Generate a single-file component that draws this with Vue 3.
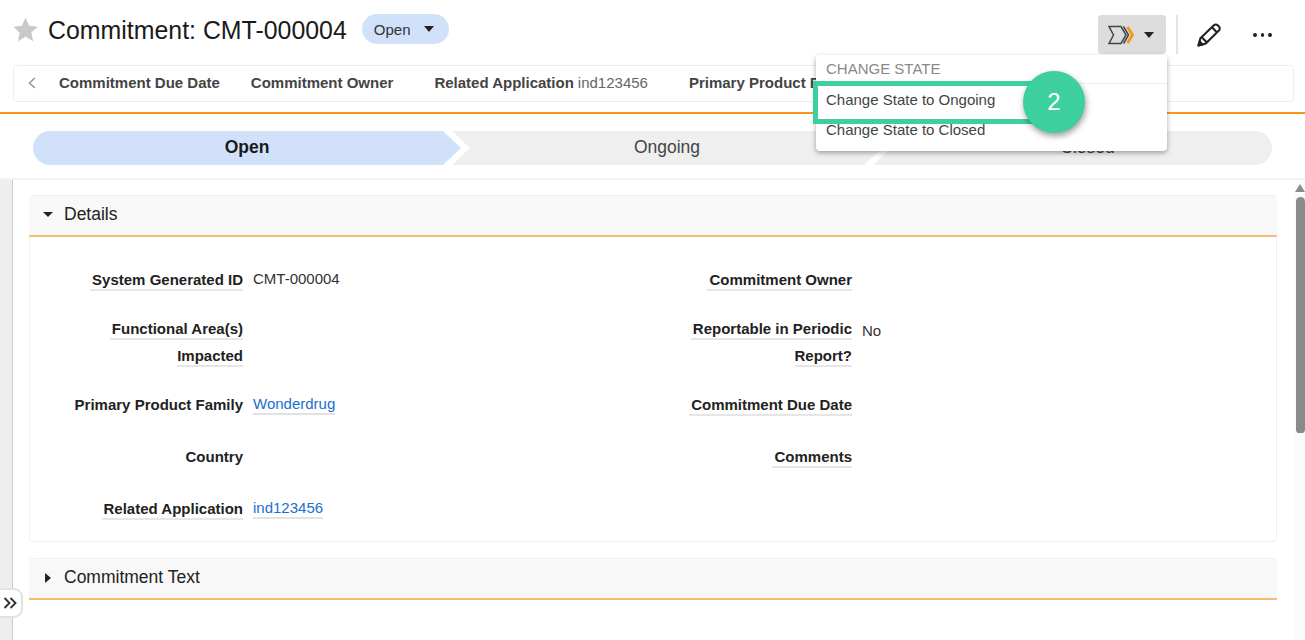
<script setup>
const tabs = [
  { label: 'Commitment Due Date' },
  { label: 'Commitment Owner' },
  { label: 'Related Application', value: 'ind123456', cls: 'tab-wide' },
  { label: 'Primary Product Family', value: 'Wonderdrug', cls: 'tab-wide' }
]
const rows = [
  { cls: '', left: { label: 'System Generated ID', value: 'CMT-000004' }, right: { label: 'Commitment Owner' } },
  { cls: '', left: { label: 'Functional Area(s) Impacted' }, right: { label: 'Reportable in Periodic Report?', value: 'No', low: true } },
  { cls: '', left: { label: 'Primary Product Family', plain: true, value: 'Wonderdrug', link: true }, right: { label: 'Commitment Due Date' } },
  { cls: 'row-tall', left: { label: 'Country', plain: true }, right: { label: 'Comments' } },
  { cls: '', left: { label: 'Related Application', value: 'ind123456', link: true }, right: {} }
]
</script>

<template>
  <div class="page">
    <header class="head">
      <div class="title-row">
        <svg class="star" viewBox="0 0 24 24" width="25" height="25"><polygon points="12,0.8 15.5,8.4 23.8,9.3 17.6,14.9 19.3,23.2 12,19 4.7,23.2 6.4,14.9 0.2,9.3 8.5,8.4" fill="#c9c9c9"/></svg>
        <h1 class="title">Commitment: CMT-000004</h1>
        <div class="badge"><span>Open</span><i class="caret"></i></div>
        <div class="actions">
          <button class="state-btn">
            <svg width="28" height="20" viewBox="0 0 28 20" fill="none">
              <path d="M1 1.5H13L18 10L13 18.5H1L5.5 10Z" stroke="#444" stroke-width="1.5"/>
              <path d="M15.5 1.5L20.5 10L15.5 18.5" stroke="#444" stroke-width="1.5"/>
              <path d="M19.5 2L24.5 10L19.5 18" stroke="#f39a1e" stroke-width="3"/>
            </svg>
            <i class="caret"></i>
          </button>
          <span class="sep"></span>
          <svg class="pencil" width="24" height="24" viewBox="0 0 24 24" fill="none" stroke="#222" stroke-width="2.1" stroke-linejoin="round">
            <path d="M1.5 22.5L3.4 15.2L16.6 2.4C17.8 1.2 19.7 1.2 20.9 2.4L21.9 3.4C23.1 4.6 23.1 6.4 21.9 7.6L8.8 20.6Z"/>
            <path d="M15 4.2L20 9.4M5 14.5L10 19.6"/>
            <path d="M1.5 22.5L2.6 18.5L5.6 21.5Z" fill="#222"/>
          </svg>
          <div class="dots"><b></b><b></b><b></b></div>
        </div>
      </div>
      <div class="tabs">
        <svg class="tab-back" width="8" height="12" viewBox="0 0 8 12" fill="none"><path d="M6.8 1L1.5 6L6.8 11" stroke="#999" stroke-width="1.6"/></svg>
        <span v-for="t in tabs" :key="t.label" class="tab" :class="t.cls">
          <strong>{{ t.label }}</strong><span v-if="t.value" class="tab-val">{{ t.value }}</span>
        </span>
      </div>
    </header>

    <div class="path">
      <div class="seg seg-open">Open</div>
      <div class="seg seg-ongoing">Ongoing</div>
      <div class="seg seg-closed">Closed</div>
    </div>

    <div class="body">
      <div class="rail"></div>
      <main class="main">
        <section class="card">
          <div class="sec-head"><i class="caret caret-big"></i><span>Details</span></div>
          <div class="form">
            <div v-for="(r, i) in rows" :key="i" class="row" :class="r.cls">
              <template v-for="(c, j) in [r.left, r.right]" :key="j">
                <div class="label"><span v-if="c.label" :class="{ lined: !c.plain }">{{ c.label }}</span></div>
                <div class="value" :class="{ low: c.low }">
                  <span v-if="c.value" :class="{ link: c.link }">{{ c.value }}</span>
                </div>
              </template>
            </div>
          </div>
        </section>
        <section class="card card-closed">
          <div class="sec-head"><i class="caret-right"></i><span>Commitment Text</span></div>
        </section>
      </main>
      <div class="scroll">
        <i class="scroll-up"></i>
        <div class="thumb"></div>
      </div>
    </div>

    <button class="toggle">
      <svg width="14" height="12" viewBox="0 0 14 12" fill="none" stroke="#333" stroke-width="1.9"><path d="M1.5 1L6.5 6L1.5 11M7.5 1L12.5 6L7.5 11"/></svg>
    </button>

    <div class="menu">
      <div class="menu-head">CHANGE STATE</div>
      <div class="menu-item first">Change State to Ongoing</div>
      <div class="menu-item">Change State to Closed</div>
    </div>
    <div class="highlight"></div>
    <div class="step">2</div>
  </div>
</template>

<style>
html, body { margin: 0; overflow: hidden; background: #fff; }
</style>

<style scoped>
.page {
  position: relative;
  width: 1305px;
  height: 640px;
  overflow: hidden;
  display: flex;
  flex-direction: column;
  background: #fff;
  font-family: "Liberation Sans", Arial, sans-serif;
  font-size: 15px;
  color: #222;
}
.head {
  box-sizing: border-box;
  height: 114px;
  flex: none;
  border-bottom: 2px solid #f7981d;
}
.title-row {
  box-sizing: border-box;
  height: 65px;
  padding: 14px 0 0 13px;
  display: flex;
  align-items: flex-start;
}
.star { margin-top: 3px; flex: none; }
.title {
  margin: 0 0 0 10px;
  font-size: 24.9px;
  font-weight: 400;
  line-height: 32px;
  color: #1a1a1a;
  white-space: nowrap;
}
.badge {
  box-sizing: border-box;
  margin-left: 15px;
  width: 87px;
  height: 30px;
  border-radius: 15px;
  background: #d1e1f9;
  display: flex;
  align-items: center;
  padding-left: 12px;
  color: #333;
}
.badge .caret { margin-left: 13px; }
.caret {
  display: inline-block;
  width: 0;
  height: 0;
  border-left: 5.5px solid transparent;
  border-right: 5.5px solid transparent;
  border-top: 6px solid #222;
}
.caret-big { border-left-width: 5px; border-right-width: 5px; border-top-width: 5px; }
.caret-right {
  display: inline-block;
  width: 0;
  height: 0;
  margin-left: 2px;
  margin-right: 2px;
  border-top: 5px solid transparent;
  border-bottom: 5px solid transparent;
  border-left: 6px solid #222;
}
.actions {
  margin-left: auto;
  margin-top: 1px;
  margin-right: 33px;
  display: flex;
  align-items: center;
  height: 39px;
}
.state-btn {
  box-sizing: border-box;
  width: 68px;
  height: 39px;
  border: 0;
  border-radius: 4px;
  background: #dcdcdc;
  display: flex;
  align-items: center;
  padding: 0 0 0 10px;
}
.state-btn .caret { margin-left: 8px; }
.sep { width: 2px; height: 39px; background: #e2e2e2; margin-left: 10px; }
.pencil { margin-left: 19px; }
.dots { display: flex; gap: 4px; margin-left: 32px; width: 19px; }
.dots b { width: 4px; height: 4px; border-radius: 50%; background: #222; }
.tabs {
  box-sizing: border-box;
  margin-left: 13px;
  width: 1281px;
  height: 37px;
  padding-bottom: 2px;
  border: 1px solid #eee;
  border-radius: 4px;
  display: flex;
  align-items: center;
  white-space: nowrap;
  overflow: hidden;
}
.tab-back { margin-left: 14px; margin-right: 23px; flex: none; }
.tab { margin-right: 31px; }
.tab-wide { margin-left: 10px; }
.tab strong { color: #444; font-weight: 700; }
.tab-val { color: #666; margin-left: 4px; }

.path {
  box-sizing: border-box;
  height: 66px;
  flex: none;
  padding: 17px 0 0 33px;
  display: flex;
  border-bottom: 2px solid #f3f3f3;
}
.seg {
  height: 34px;
  line-height: 33px;
  text-align: center;
  font-size: 17.5px;
  background: #efefef;
  color: #444;
}
.seg-open {
  width: 428px;
  background: #d1e1f9;
  color: #1a1a1a;
  font-weight: 700;
  border-radius: 17px 0 0 17px;
  clip-path: polygon(0 0, 410px 0, 100% 50%, 410px 100%, 0 100%);
}
.seg-ongoing {
  width: 430px;
  margin-left: -9px;
  clip-path: polygon(0 0, 412px 0, 100% 50%, 412px 100%, 0 100%, 18px 50%);
}
.seg-closed {
  box-sizing: border-box;
  width: 399px;
  margin-left: -9px;
  padding-left: 30px;
  border-radius: 0 17px 17px 0;
  clip-path: polygon(0 0, 100% 0, 100% 100%, 0 100%, 18px 50%);
}

.body { flex: 1; min-height: 0; display: flex; }
.rail {
  box-sizing: border-box;
  width: 13px;
  flex: none;
  background: #eee;
  border-right: 1px solid #ccc;
}
.main { flex: 1; min-width: 0; padding: 15px 18px 0 16px; }
.card {
  border: 1px solid #f0f0f0;
  border-radius: 4px;
}
.card-closed { margin-top: 16px; border-bottom: 0; }
.sec-head {
  box-sizing: border-box;
  height: 41px;
  margin: 0 -1px;
  display: flex;
  align-items: center;
  background: #f8f8f8;
  border-bottom: 2px solid #f6bb76;
  padding: 0 0 2px 14px;
  font-size: 17.5px;
  color: #222;
}
.sec-head span { margin-left: 11px; }
.form { padding: 29px 0 19px; }
.row {
  display: grid;
  grid-template-columns: 213px 396px 213px 1fr;
  margin-bottom: 22px;
  line-height: 27px;
}
.row:last-child { margin-bottom: 0; }
.row-tall { padding: 3px 0; }
.label {
  box-sizing: border-box;
  padding-left: 40px;
  text-align: right;
  font-weight: 700;
  color: #222;
}
.lined { border-bottom: 2px solid #e6e6e6; padding-bottom: 1px; padding-left: 2px; }
.value {
  padding-left: 10px;
  line-height: 25px;
  color: #333;
}
.value.low { line-height: 27px; padding-top: 2px; }
.link { color: #1a6fd0; border-bottom: 2px solid #e2e2e2; padding-bottom: 1px; }

.scroll {
  box-sizing: border-box;
  width: 10px;
  flex: none;
  padding-top: 4px;
  background: #fbfbfb;
}
.scroll-up {
  display: block;
  width: 0;
  height: 0;
  border-left: 5px solid transparent;
  border-right: 5px solid transparent;
  border-bottom: 8px solid #8a8a8a;
}
.thumb {
  margin: 5px 0 0 1px;
  height: 236px;
  background: #8a8a8a;
  border-radius: 5px 5px 4px 4px;
}

.toggle {
  position: absolute;
  left: 0;
  top: 588px;
  box-sizing: border-box;
  width: 23px;
  height: 30px;
  padding: 0 0 0 3px;
  background: #fff;
  border: 2px solid #e2e2e2;
  border-left: 0;
  border-radius: 0 9px 9px 0;
  display: flex;
  align-items: center;
}

.menu {
  position: absolute;
  left: 816px;
  top: 55px;
  box-sizing: border-box;
  width: 351px;
  height: 96px;
  background: #fff;
  border-radius: 4px;
  box-shadow: 0 2px 5px rgba(0, 0, 0, 0.35);
  color: #444;
}
.menu-head {
  box-sizing: border-box;
  height: 29px;
  line-height: 28px;
  padding-left: 10px;
  color: #8a8a8a;
  border-bottom: 1px solid #eee;
}
.menu-item { height: 30px; line-height: 29px; padding-left: 10px; }
.menu-item.first { margin-top: 1px; }
.highlight {
  position: absolute;
  left: 813px;
  top: 81px;
  box-sizing: border-box;
  width: 225px;
  height: 43px;
  border: 5px solid #3ecf9e;
}
.step {
  position: absolute;
  left: 1023px;
  top: 71px;
  width: 62px;
  height: 62px;
  border-radius: 50%;
  background: #3ecf9e;
  color: #fff;
  font-size: 24px;
  line-height: 62px;
  text-align: center;
  box-shadow: 1px 3px 6px rgba(0, 0, 0, 0.4);
}
</style>
